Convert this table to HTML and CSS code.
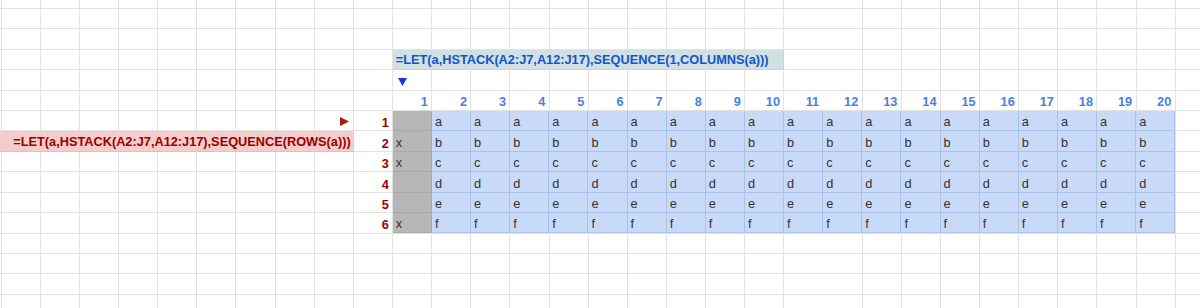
FILE: index.html
```html
<!DOCTYPE html>
<html lang="en">
<head>
<meta charset="utf-8">
<title>Sheet</title>
<link rel="stylesheet" href="styles.css">
</head>
<body>
<div class="sheet">
  <div class="formula formula-top">=LET(a,HSTACK(A2:J7,A12:J17),SEQUENCE(1,COLUMNS(a)))</div>
  <div class="mark mark-down"><svg width="9" height="8" viewBox="0 0 9 8"><polygon points="0,0 9,0 4.5,8" fill="#1c35d6"/></svg></div>
  <div class="colnums">
    <div class="cn">1</div><div class="cn">2</div><div class="cn">3</div><div class="cn">4</div><div class="cn">5</div>
    <div class="cn">6</div><div class="cn">7</div><div class="cn">8</div><div class="cn">9</div><div class="cn">10</div>
    <div class="cn">11</div><div class="cn">12</div><div class="cn">13</div><div class="cn">14</div><div class="cn">15</div>
    <div class="cn">16</div><div class="cn">17</div><div class="cn">18</div><div class="cn">19</div><div class="cn">20</div>
  </div>
  <div class="mark mark-right"><svg width="9" height="9" viewBox="0 0 9 9"><polygon points="0,0 9,4.5 0,9" fill="#a61c00"/></svg></div>
  <div class="formula formula-left">=LET(a,HSTACK(A2:J7,A12:J17),SEQUENCE(ROWS(a)))</div>
  <div class="table">
    <div class="rn">1</div><div class="gc"></div>
    <div class="bc">a</div><div class="bc">a</div><div class="bc">a</div><div class="bc">a</div><div class="bc">a</div><div class="bc">a</div><div class="bc">a</div><div class="bc">a</div><div class="bc">a</div><div class="bc">a</div><div class="bc">a</div><div class="bc">a</div><div class="bc">a</div><div class="bc">a</div><div class="bc">a</div><div class="bc">a</div><div class="bc">a</div><div class="bc">a</div><div class="bc">a</div>
    <div class="rn">2</div><div class="gc">x</div>
    <div class="bc">b</div><div class="bc">b</div><div class="bc">b</div><div class="bc">b</div><div class="bc">b</div><div class="bc">b</div><div class="bc">b</div><div class="bc">b</div><div class="bc">b</div><div class="bc">b</div><div class="bc">b</div><div class="bc">b</div><div class="bc">b</div><div class="bc">b</div><div class="bc">b</div><div class="bc">b</div><div class="bc">b</div><div class="bc">b</div><div class="bc">b</div>
    <div class="rn">3</div><div class="gc">x</div>
    <div class="bc">c</div><div class="bc">c</div><div class="bc">c</div><div class="bc">c</div><div class="bc">c</div><div class="bc">c</div><div class="bc">c</div><div class="bc">c</div><div class="bc">c</div><div class="bc">c</div><div class="bc">c</div><div class="bc">c</div><div class="bc">c</div><div class="bc">c</div><div class="bc">c</div><div class="bc">c</div><div class="bc">c</div><div class="bc">c</div><div class="bc">c</div>
    <div class="rn">4</div><div class="gc"></div>
    <div class="bc">d</div><div class="bc">d</div><div class="bc">d</div><div class="bc">d</div><div class="bc">d</div><div class="bc">d</div><div class="bc">d</div><div class="bc">d</div><div class="bc">d</div><div class="bc">d</div><div class="bc">d</div><div class="bc">d</div><div class="bc">d</div><div class="bc">d</div><div class="bc">d</div><div class="bc">d</div><div class="bc">d</div><div class="bc">d</div><div class="bc">d</div>
    <div class="rn">5</div><div class="gc"></div>
    <div class="bc">e</div><div class="bc">e</div><div class="bc">e</div><div class="bc">e</div><div class="bc">e</div><div class="bc">e</div><div class="bc">e</div><div class="bc">e</div><div class="bc">e</div><div class="bc">e</div><div class="bc">e</div><div class="bc">e</div><div class="bc">e</div><div class="bc">e</div><div class="bc">e</div><div class="bc">e</div><div class="bc">e</div><div class="bc">e</div><div class="bc">e</div>
    <div class="rn">6</div><div class="gc">x</div>
    <div class="bc">f</div><div class="bc">f</div><div class="bc">f</div><div class="bc">f</div><div class="bc">f</div><div class="bc">f</div><div class="bc">f</div><div class="bc">f</div><div class="bc">f</div><div class="bc">f</div><div class="bc">f</div><div class="bc">f</div><div class="bc">f</div><div class="bc">f</div><div class="bc">f</div><div class="bc">f</div><div class="bc">f</div><div class="bc">f</div><div class="bc">f</div>
  </div>
</div>
</body>
</html>
```

FILE: styles.css
```css
html, body {
  margin: 0;
  padding: 0;
  background: #ffffff;
}

body {
  width: 1200px;
  height: 308px;
  overflow: hidden;
  font-family: "Liberation Sans", Arial, sans-serif;
  font-size: 12.75px;
  color: #222222;
}

.sheet {
  display: grid;
  grid-template-columns: 1.56px repeat(30, 39.14px) 24.24px;
  grid-template-rows: 9px repeat(14, 20.41px) 13.3px;
  width: 1200px;
  height: 308px;
  background-color: #ffffff;
  background-image:
    repeating-linear-gradient(to right, transparent 0 0.56px, #e2e2e2 0.56px 1.56px, transparent 1.56px 39.14px),
    repeating-linear-gradient(to bottom, transparent 0 8px, #e2e2e2 8px 9px, transparent 9px 20.41px);
}

.formula {
  display: flex;
  align-items: flex-end;
  font-weight: bold;
  white-space: nowrap;
  padding: 0 3px 2px 3px;
  box-sizing: border-box;
  line-height: 15px;
}

.formula-top {
  grid-column: 12 / 22;
  grid-row: 4;
  background: #d0e0e3;
  color: #1155cc;
  border-right: 1px solid #c3d4d7;
  border-bottom: 1px solid #c3d4d7;
}

.formula-left {
  grid-column: 1 / 11;
  grid-row: 8;
  background: #f4cccc;
  color: #990000;
  justify-content: flex-end;
  border-bottom: 1px solid #e8bcbc;
}

.mark {
  display: flex;
  align-items: flex-end;
  padding-bottom: 5px;
  box-sizing: border-box;
}

.mark svg {
  display: block;
}

.mark-down {
  grid-column: 12;
  grid-row: 5;
  padding-left: 5px;
}

.mark-right {
  grid-column: 10;
  grid-row: 7;
  justify-content: flex-end;
  padding-right: 5px;
}

.colnums {
  grid-column: 12 / 32;
  grid-row: 6;
  display: grid;
  grid-template-columns: repeat(20, 39.14px);
}

.cn {
  display: flex;
  align-items: flex-end;
  justify-content: flex-end;
  padding: 0 4px 2px 0;
  line-height: 15px;
  font-weight: bold;
  color: #4a7fdc;
}

.table {
  grid-column: 11 / 32;
  grid-row: 7 / 13;
  display: grid;
  grid-template-columns: repeat(21, 39.14px);
  grid-template-rows: repeat(6, 20.41px);
}

.rn,
.gc,
.bc {
  display: flex;
  align-items: flex-end;
  box-sizing: border-box;
  line-height: 15px;
  padding-bottom: 1px;
}

.rn {
  justify-content: flex-end;
  padding-right: 4px;
  font-weight: bold;
  color: #990000;
}

.gc {
  background: #b7b7b7;
  border-right: 1px solid #a9a9a9;
  border-bottom: 1px solid #a9a9a9;
  padding-left: 3px;
  color: #333333;
}

.bc {
  background: #c9daf8;
  border-right: 1px solid #a9c2ec;
  border-bottom: 1px solid #a9c2ec;
  padding-left: 3px;
  color: #333333;
}
```
